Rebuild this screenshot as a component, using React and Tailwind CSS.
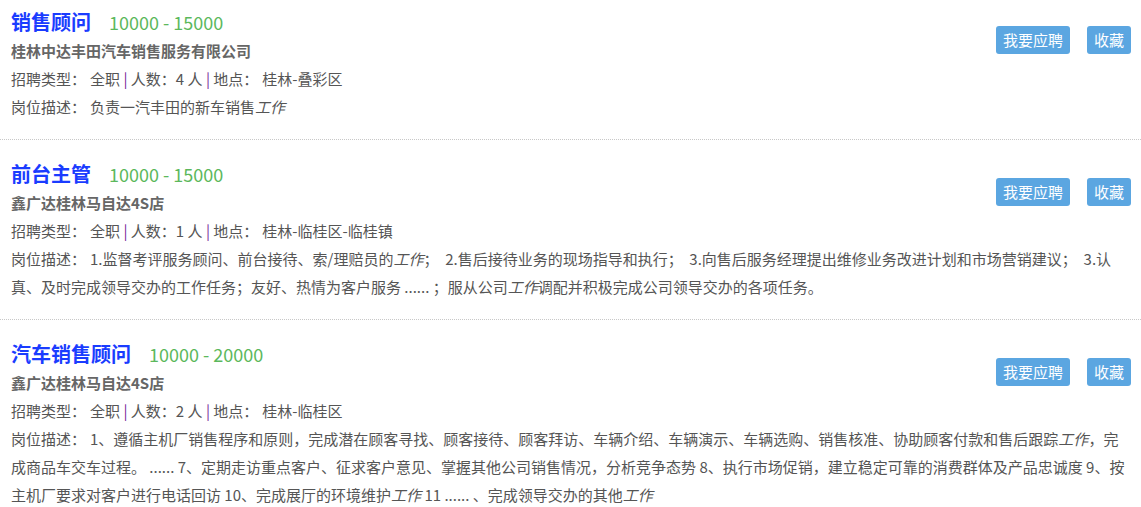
import React from 'react';

const jobs = [
  {
    title: '销售顾问',
    salary: '10000 - 15000',
    company: '桂林中达丰田汽车销售服务有限公司',
    count: 4,
    place: '桂林-叠彩区',
    desc: [['负责一汽丰田的新车销售', 0], ['工作', 1]],
  },
  {
    title: '前台主管',
    salary: '10000 - 15000',
    company: '鑫广达桂林马自达4S店',
    count: 1,
    place: '桂林-临桂区-临桂镇',
    desc: [
      ['1.监督考评服务顾问、前台接待、索/理赔员的', 0],
      ['工作', 1],
      ['；\u00a0 2.售后接待业务的现场指导和执行；\u00a0 3.向售后服务经理提出维修业务改进计划和市场营销建议；\u00a0 3.认真、及时完成领导交办的工作任务；友好、热情为客户服务 ...... ；服从公司', 0],
      ['工作', 1],
      ['调配并积极完成公司领导交办的各项任务。', 0],
    ],
  },
  {
    title: '汽车销售顾问',
    salary: '10000 - 20000',
    company: '鑫广达桂林马自达4S店',
    count: 2,
    place: '桂林-临桂区',
    desc: [
      ['1、遵循主机厂销售程序和原则，完成潜在顾客寻找、顾客接待、顾客拜访、车辆介绍、车辆演示、车辆选购、销售核准、协助顾客付款和售后跟踪', 0],
      ['工作', 1],
      ['，完成商品车交车过程。 ...... 7、定期走访重点客户、征求客户意见、掌握其他公司销售情况，分析竞争态势 8、执行市场促销，建立稳定可靠的消费群体及产品忠诚度 9、按主机厂要求对客户进行电话回访 10、完成展厅的环境维护', 0],
      ['工作', 1],
      [' 11 ...... 、完成领导交办的其他', 0],
      ['工作', 1],
    ],
  },
];

function JobItem({ job, first }) {
  return (
    <div className={`${first ? 'pt-[7px]' : 'pt-[19px]'} pb-[18px] pl-[11px] pr-[10px] border-b border-dotted border-[#c8c8c8]`}>
      <div className="flex justify-between">
        <div>
          <div className="flex items-center h-[30px]">
            <span className="text-[20px] font-bold text-[#1a3cff]">{job.title}</span>
            <span className="ml-[18px] text-[18px] text-[#5cb85c]">{job.salary}</span>
          </div>
          <div className="leading-[28px] font-bold text-[#666]">{job.company}</div>
          <div className="leading-[28px]">
            招聘类型：<span className="ml-[4px]">全职</span> <span className="text-[#7a2a9a]">|</span> 人数：{job.count} 人 <span className="text-[#7a2a9a]">|</span> 地点：<span className="ml-[4px]">{job.place}</span>
          </div>
        </div>
        <div className="flex gap-[17px] mt-[19px] h-[28px]">
          <button className="h-[28px] px-[7px] rounded-[3px] bg-[#5ba6e1] text-white text-[15px]">我要应聘</button>
          <button className="h-[28px] px-[7px] rounded-[3px] bg-[#5ba6e1] text-white text-[15px]">收藏</button>
        </div>
      </div>
      <div className="leading-[28px]">
        岗位描述：<span className="ml-[4px]"></span>
        {job.desc.map(([t, em], i) =>
          em ? <em key={i} className="italic">{t}</em> : <span key={i}>{t}</span>
        )}
      </div>
    </div>
  );
}

export default function App() {
  return (
    <div className="bg-white w-[1141px] min-h-[507px] text-[15px] text-[#555] font-['Noto_Sans_CJK_SC','Microsoft_YaHei',sans-serif]">
      {jobs.map((job, i) => (
        <JobItem key={i} job={job} first={i === 0} />
      ))}
    </div>
  );
}
